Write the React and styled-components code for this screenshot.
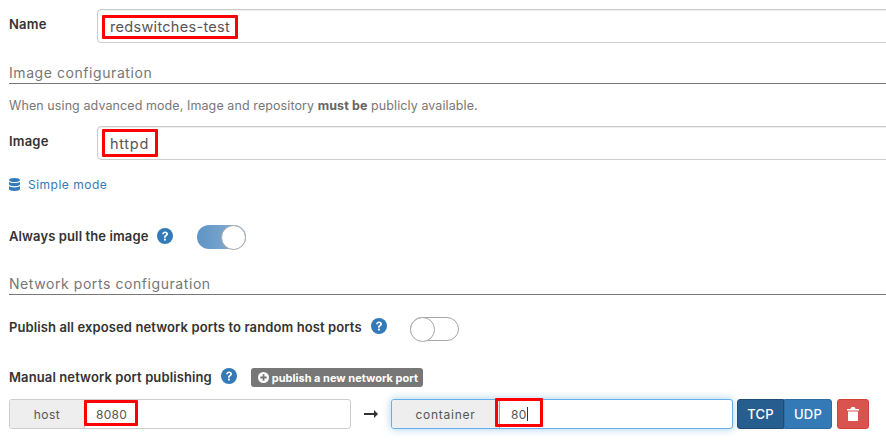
import React from "react";
import styled, { createGlobalStyle } from "styled-components";

const Global = createGlobalStyle`
  html, body { margin: 0; padding: 0; background: #fff; }
  body { width: 886px; height: 446px; overflow: hidden; font-family: Inter, "Noto Sans", "Liberation Sans", sans-serif; color: #333; }
`;
const Page = styled.div`
  width: 886px; height: 446px; padding: 9px 0 0 9px; box-sizing: border-box; overflow: hidden;
  font-size: 13px;
`;
const FieldRow = styled.div`
  display: flex; align-items: center; height: 34px; margin-top: ${p => p.$top || 0}px;
`;
const FieldLabel = styled.label`
  width: 88px; flex: none; font-weight: 600; font-size: 13px; letter-spacing: 0.2px; color: #333; position: relative; top: -2px;
`;
const TextBox = styled.div`
  flex: none; width: 800px; height: 34px; box-sizing: border-box; border: 1px solid #ccc; border-radius: 4px;
  background: #fff; display: flex; align-items: center; padding-left: 4px;
  box-shadow: inset 0 1px 1px rgba(0,0,0,.075);
`;
const Marked = styled.span`
  display: inline-flex; align-items: center; width: ${p => p.$w}px; height: ${p => p.$h}px; box-sizing: border-box; border: 3px solid #f00; border-radius: 1px;
  padding: 0 5px; margin-top: ${p => p.$shift}px; font-size: 14.5px; font-weight: 400; color: #555; letter-spacing: ${p => p.$ls}px; white-space: nowrap;
`;
const SectionTitle = styled.div`
  margin-top: ${p => p.$top}px; height: 23px; padding-top: 3px; box-sizing: border-box; border-bottom: 1px solid #777;
  font-size: 14px; line-height: 17px; color: #767676; letter-spacing: 0.57px;
`;
const Help = styled.p`
  margin: 14px 0 0; font-size: 12.5px; line-height: 16px; color: #777; letter-spacing: 0.09px;
  b { color: #666; font-weight: 700; }
`;
const ModeLink = styled.div`
  margin-top: 16px; height: 16px; display: flex; align-items: center; gap: 8px; color: #337ab7; font-size: 12px; letter-spacing: 0.5px;
`;
const OptionRow = styled.div`
  display: flex; align-items: center; height: 25px; margin-top: ${p => p.$top}px; font-weight: 600; font-size: 13px;
`;
const OptionLabel = styled.span`
  color: #333; white-space: nowrap; letter-spacing: 0.11px; position: relative; top: ${p => p.$up}px;
`;
const HelpDot = styled.svg`
  width: 16px; height: 16px; margin-left: 9px; flex: none; position: relative; top: ${p => p.$up}px;
`;
const Track = styled.div`
  width: 49px; height: 24px; box-sizing: border-box; margin-left: ${p => p.$left}px; flex: none; border-radius: 12px;
  position: relative; background: ${p => p.$on ? "linear-gradient(90deg,#5f94c4,#8db1d5)" : "#fff"};
  border: ${p => p.$on ? "none" : "1px solid #a6a6a6"};
`;
const Knob = styled.div`
  position: absolute; top: ${p => p.$on ? 0 : -1}px; ${p => p.$on ? "right: 0" : "left: -1px"};
  width: 25px; height: 25px; box-sizing: border-box; border-radius: 50%; background: #fff; border: 1px solid #a6a6a6;
`;
const PublishButton = styled.div`
  margin-left: 14px; width: 172px; height: 19px; border-radius: 3px; background: #777; color: #fff; font-size: 11px; font-weight: 700;
  display: flex; align-items: center; box-sizing: border-box; padding-left: 7px; gap: 3px; letter-spacing: 0; white-space: nowrap;
`;
const PortRow = styled.div`
  display: flex; align-items: center; margin-top: 9px; height: 30px;
`;
const PortGroup = styled.div`
  width: 342px; height: 30px; box-sizing: border-box; display: flex; border-radius: 3px; flex: none; background: #fff;
  border: 1px solid ${p => p.$focus ? "#66afe9" : "#ccc"};
  box-shadow: ${p => p.$focus ? "0 0 8px rgba(102,175,233,.6)" : "none"};
`;
const Addon = styled.div`
  width: ${p => p.$w}px; flex: none; background: #eee; box-sizing: border-box; display: flex; align-items: center; justify-content: center;
  color: #555; font-size: 12px; letter-spacing: ${p => p.$ls}px; border-radius: 3px 0 0 3px; border-right: 1px solid ${p => p.$edge};
`;
const PortInput = styled.div`
  position: relative; flex: 1; display: flex; align-items: center; padding-left: ${p => p.$pad}px;
  font-size: 12px; color: #555; letter-spacing: 0.3px;
`;
const PortMark = styled.span`
  position: absolute; box-sizing: border-box; border: 3px solid #f00; border-radius: 1px;
  left: ${p => p.$left}px; top: ${p => p.$top}px; width: ${p => p.$w}px; height: ${p => p.$h}px;
`;
const Caret = styled.i`
  display: inline-block; width: 1px; height: 14px; background: #333;
`;
const ArrowBox = styled.div`
  width: 40px; flex: none; display: flex; justify-content: center; align-items: center;
`;
const Toggle = styled.div`
  display: flex; margin-left: 4px; height: 30px; flex: none;
`;
const ProtoButton = styled.div`
  width: ${p => p.$w}px; box-sizing: border-box; display: flex; align-items: center; justify-content: center; color: #fff; font-size: 13px; font-weight: 500; letter-spacing: 0.2px;
  background: ${p => p.$active ? "#265f8f" : "#337ab7"}; border: 1px solid ${p => p.$active ? "#204d74" : "#2e6da4"};
  border-radius: ${p => p.$first ? "3px 0 0 3px" : "0 3px 3px 0"};
`;
const DeleteButton = styled.div`
  width: 32px; height: 30px; margin-left: 5px; flex: none; box-sizing: border-box; border-radius: 3px; background: #d9534f; border: 1px solid #d43f3a;
  display: flex; align-items: center; justify-content: center;
`;

const Question = ({ up }) => (
  <HelpDot $up={up} viewBox="0 0 16 16">
    <circle cx="8" cy="8" r="8" fill="#337ab7" />
    <path d="M5.200 6.200C5.300 4.600 6.500 3.600 8.100 3.600c1.700 0 2.900 1 2.900 2.400 0 1.200-.7 1.700-1.500 2.300-.6.400-.8.700-.8 1.400H7c0-1.200.3-1.800 1.100-2.400.7-.5 1-.8 1-1.300 0-.6-.4-1-1.100-1-.7 0-1.100.4-1.200 1.200z" fill="#fff" />
    <rect x="7" y="10.600" width="1.800" height="1.900" fill="#fff" />
  </HelpDot>
);

export default function App() {
  return (
    <Page>
      <Global />
      <FieldRow>
        <FieldLabel>Name</FieldLabel>
        <TextBox><Marked $w={136} $h={24} $shift={1} $ls={0.3}>redswitches-test</Marked></TextBox>
      </FieldRow>
      <SectionTitle $top={18}>Image configuration</SectionTitle>
      <Help>When using advanced mode, Image and repository <b>must be</b> publicly available.</Help>
      <FieldRow $top={12}>
        <FieldLabel>Image</FieldLabel>
        <TextBox><Marked $w={56} $h={28} $shift={0} $ls={0.7}>httpd</Marked></TextBox>
      </FieldRow>
      <ModeLink>
        <svg width="11" height="13" viewBox="0 0 11 13">
          <ellipse cx="5.500" cy="2" rx="5.500" ry="2" fill="#337ab7" />
          <path d="M0 3.700C1 4.700 3 5.100 5.500 5.100S10 4.700 11 3.700V6.300c0 1.100-2.500 2-5.500 2S0 7.400 0 6.300z" fill="#337ab7" />
          <path d="M0 8.100C1 9.100 3 9.500 5.500 9.500S10 9.100 11 8.100V11c0 1.100-2.500 2-5.500 2S0 12.100 0 11z" fill="#337ab7" />
        </svg>
        Simple mode
      </ModeLink>
      <OptionRow $top={32}>
        <OptionLabel $up={-1}>Always pull the image</OptionLabel>
        <Question up={-1} />
        <Track $on $left={24}><Knob $on /></Track>
      </OptionRow>
      <SectionTitle $top={23}>Network ports configuration</SectionTitle>
      <OptionRow $top={21}>
        <OptionLabel $up={-2}>Publish all exposed network ports to random host ports</OptionLabel>
        <Question up={-3} />
        <Track $left={23}><Knob /></Track>
      </OptionRow>
      <OptionRow $top={24}>
        <OptionLabel $up={-1}>Manual network port publishing</OptionLabel>
        <Question up={-2} />
        <PublishButton>
          <svg width="11" height="11" viewBox="0 0 12 12">
            <circle cx="6" cy="6" r="6" fill="#fff" />
            <path d="M5 2.500h2V5h2.500v2H7v2.500H5V7H2.500V5H5z" fill="#777" />
          </svg>
          publish a new network port
        </PublishButton>
      </OptionRow>
      <PortRow>
        <PortGroup>
          <Addon $w={75} $ls={0.5} $edge="#ccc">host</Addon>
          <PortInput $pad={11}>
            8080
            <PortMark $left={-1} $top={0} $w={54} $h={26} />
          </PortInput>
        </PortGroup>
        <ArrowBox>
          <svg width="14" height="8" viewBox="0 0 14 8">
            <path d="M0 3h10V0l4 4-4 4V5H0z" fill="#333" />
          </svg>
        </ArrowBox>
        <PortGroup $focus>
          <Addon $w={108} $ls={0.75} $edge="#66afe9">container</Addon>
          <PortInput $pad={11}>
            80<Caret />
            <PortMark $left={-5} $top={-2} $w={48} $h={29} />
          </PortInput>
        </PortGroup>
        <Toggle>
          <ProtoButton $w={47} $active $first>TCP</ProtoButton>
          <ProtoButton $w={48}>UDP</ProtoButton>
        </Toggle>
        <DeleteButton>
          <svg width="12" height="14" viewBox="0 0 12 14">
            <path d="M0 2h3.500l.6-1.400C4.300.2 4.600 0 5 0h2c.4 0 .7.200.9.600L8.500 2H12v1.500H0zM1 4.500h10V13c0 .6-.4 1-1 1H2c-.6 0-1-.4-1-1z" fill="#fff" />
          </svg>
        </DeleteButton>
      </PortRow>
    </Page>
  );
}
